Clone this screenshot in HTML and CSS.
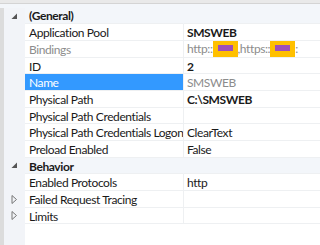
FILE: index.html
```html
<!DOCTYPE html>
<html lang="en">
<head>
    <meta charset="UTF-8">
    <title>Site Properties</title>
  <link rel="stylesheet" href="styles.css">
</head>
<body>

    <div class="props">
        <!-- (General) category -->
        <div class="row category">
            <div class="gutter"><svg class="exp" width="7" height="7" viewBox="0 0 7 7"><path d="M6 0.5 L6 6 L0.5 6 Z" fill="#555"/></svg></div>
            <div class="name">(General)</div>
            <div class="value"></div>
        </div>
        <div class="row">
            <div class="gutter"></div>
            <div class="name">Application Pool</div>
            <div class="value bold">SMSWEB</div>
        </div>
        <div class="row readonly">
            <div class="gutter"></div>
            <div class="name">Bindings</div>
            <div class="value">http::<span class="mask"><span class="bar"></span></span>,https::<span class="mask"><span class="bar"></span></span>:</div>
        </div>
        <div class="row">
            <div class="gutter"></div>
            <div class="name">ID</div>
            <div class="value bold">2</div>
        </div>
        <div class="row selected">
            <div class="gutter"></div>
            <div class="name">Name</div>
            <div class="value">SMSWEB</div>
        </div>
        <div class="row">
            <div class="gutter"></div>
            <div class="name">Physical Path</div>
            <div class="value bold">C:\SMSWEB</div>
        </div>
        <div class="row">
            <div class="gutter"></div>
            <div class="name">Physical Path Credentials</div>
            <div class="value"></div>
        </div>
        <div class="row">
            <div class="gutter"></div>
            <div class="name">Physical Path Credentials Logon</div>
            <div class="value">ClearText</div>
        </div>
        <div class="row">
            <div class="gutter"></div>
            <div class="name">Preload Enabled</div>
            <div class="value">False</div>
        </div>

        <!-- Behavior category -->
        <div class="row category">
            <div class="gutter"><svg class="exp" width="7" height="7" viewBox="0 0 7 7"><path d="M6 0.5 L6 6 L0.5 6 Z" fill="#555"/></svg></div>
            <div class="name">Behavior</div>
            <div class="value"></div>
        </div>
        <div class="row">
            <div class="gutter"></div>
            <div class="name">Enabled Protocols</div>
            <div class="value">http</div>
        </div>
        <div class="row">
            <div class="gutter"><svg class="exp" width="7" height="9" viewBox="0 0 7 9"><path d="M1 0.5 L5.5 4.5 L1 8.5 Z" fill="none" stroke="#777"/></svg></div>
            <div class="name">Failed Request Tracing</div>
            <div class="value"></div>
        </div>
        <div class="row">
            <div class="gutter"><svg class="exp" width="7" height="9" viewBox="0 0 7 9"><path d="M1 0.5 L5.5 4.5 L1 8.5 Z" fill="none" stroke="#777"/></svg></div>
            <div class="name">Limits</div>
            <div class="value"></div>
        </div>
        <div class="filler">
            <div class="gutter"></div>
            <div class="rest"></div>
        </div>
    </div>

</body>
</html>
```

FILE: styles.css
```css
body {
    margin: 0;
    background: #fff;
    font-family: Lato, "Open Sans", sans-serif;
    font-size: 12px;
    letter-spacing: -0.4px;
    color: #1a1a1a;
}
.props {
    height: 245px;
    display: flex;
    flex-direction: column;
    background: #e9e9e9;
    padding-top: 3px;
    box-sizing: border-box;
}
.row {
    display: flex;
    height: 16.67px;
    flex-shrink: 0;
    background: #fff;
}
.props > .row:first-child {
    box-sizing: border-box;
    height: 21.3px;
    border-top: 1px solid #d4d4d4;
    padding-top: 4px;
}
.gutter {
    width: 21px;
    flex-shrink: 0;
    background: #f2f4f8;
    border-left: 4px solid #dcdcdc;
    display: flex;
    align-items: center;
    justify-content: center;
}
.name {
    width: 154px;
    flex-shrink: 0;
    padding-left: 4px;
    border-bottom: 1px solid #eef0f2;
    border-right: 1px solid #eef0f2;
    white-space: nowrap;
    overflow: hidden;
    line-height: 17px;
}
.props > .row:first-child .name {
    line-height: 16px;
}
.value {
    flex-grow: 1;
    padding-left: 3px;
    border-bottom: 1px solid #eef0f2;
    white-space: nowrap;
    line-height: 17px;
}
.bold {
    font-weight: bold;
}
.category {
    background: #f3f6fa;
}
.category .name {
    font-weight: bold;
    border-right-color: transparent;
}
.category .name,
.category .value {
    background: #f3f6fa;
}
.readonly .name,
.readonly .value {
    color: #8c8c8c;
}
.selected .name {
    background: #3399ff;
    color: #fff;
}
.selected .value {
    color: #8c8c8c;
}
.readonly .value {
    display: flex;
    align-items: center;
}
.mask {
    display: inline-flex;
    align-items: center;
    justify-content: center;
    width: 25px;
    height: 16px;
    background: #ffc000;
}
.bar {
    width: 15px;
    height: 6px;
    margin-top: -2px;
    background: #9e4fb8;
}
.filler {
    flex-grow: 1;
    display: flex;
    background: #fff;
}
.filler .rest {
    flex-grow: 1;
}
.exp {
    display: block;
}
```
